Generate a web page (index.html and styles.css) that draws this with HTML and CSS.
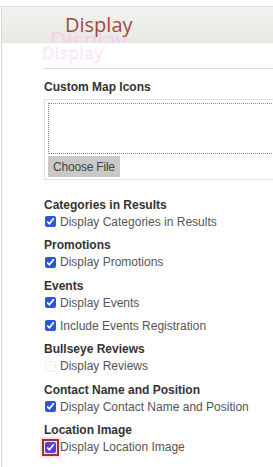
FILE: index.html
```html
<!DOCTYPE html>
<html lang="en">
<head>
    <meta charset="UTF-8">
    <meta name="viewport" content="width=device-width, initial-scale=1.0">
    <title>Display Settings</title>
    <link rel="stylesheet" href="styles.css">
</head>
<body>
    <div class="panel">
        <header class="panel-header">
            <h1 class="panel-title">Display</h1>
            <span class="ghost ghost-one">Display</span>
        </header>
        <span class="ghost ghost-two">Display</span>
        <section class="settings">
            <hr class="rule">
            <div class="group">
                <h2 class="group-title">Custom Map Icons</h2>
                <div class="upload">
                    <div class="drop-zone"></div>
                    <button class="file-button">Choose File</button>
                </div>
            </div>
            <div class="group group-first">
                <h2 class="group-title">Categories in Results</h2>
                <label class="option"><input type="checkbox" checked> Display Categories in Results</label>
            </div>
            <div class="group">
                <h2 class="group-title">Promotions</h2>
                <label class="option"><input type="checkbox" checked> Display Promotions</label>
            </div>
            <div class="group">
                <h2 class="group-title">Events</h2>
                <label class="option"><input type="checkbox" checked> Display Events</label>
                <label class="option option-extra"><input type="checkbox" checked> Include Events Registration</label>
            </div>
            <div class="group">
                <h2 class="group-title">Bullseye Reviews</h2>
                <label class="option"><input type="checkbox" disabled> Display Reviews</label>
            </div>
            <div class="group">
                <h2 class="group-title">Contact Name and Position</h2>
                <label class="option"><input type="checkbox" checked> Display Contact Name and Position</label>
            </div>
            <div class="group">
                <h2 class="group-title">Location Image</h2>
                <label class="option"><input class="focused" type="checkbox" checked> Display Location Image</label>
            </div>
        </section>
    </div>
</body>
</html>
```

FILE: styles.css
```css
body {
    margin: 0;
    background: #ffffff;
    font-family: "Liberation Sans", Arial, sans-serif;
    overflow: hidden;
}
.panel {
    position: relative;
    width: 320px;
    margin: 6px 0 0 1px;
    border-top: 1px solid #dcdcdc;
    border-left: 1px solid #d4d4d4;
    min-height: 470px;
}
.panel-header {
    position: relative;
    height: 35px;
    overflow: hidden;
    background: linear-gradient(180deg, #f2f2ef, #e9e8e4);
    border-bottom: 1px solid #e2e2e0;
    padding-left: 63px;
}
.panel-title {
    position: relative;
    z-index: 1;
    margin: 0;
    font-family: "Open Sans", sans-serif;
    font-weight: 400;
    font-size: 20px;
    line-height: 35px;
    color: #a04a3e;
}
.ghost {
    position: absolute;
    font-family: "Open Sans", sans-serif;
    pointer-events: none;
    line-height: 1;
}
.ghost-one {
    left: 48px;
    top: 22px;
    font-size: 23px;
    color: #f7cdee;
}
.ghost-two {
    left: 40px;
    top: 37px;
    font-size: 17px;
    color: #ffffff;
    -webkit-text-stroke: 0.5px #f5d4f2;
    letter-spacing: 0.6px;
}
.settings {
    padding-left: 42px;
}
.rule {
    margin: 25px 0 0;
    border: none;
    border-top: 1px solid #dddddd;
}
.group {
    margin-top: 8.5px;
}
.group:nth-child(2) {
    margin-top: 11px;
}
.group-first {
    margin-top: 17.5px;
}
.group-title {
    margin: 0;
    font-size: 12px;
    line-height: 14px;
    font-weight: 700;
    color: #333333;
}
.upload {
    margin-top: 5px;
    border: 1px solid #e0e0e0;
    padding: 3px 3px 2px;
}
.drop-zone {
    height: 49px;
    border: 1px dotted #8a8a8a;
}
.file-button {
    display: block;
    margin-top: 2px;
    height: 21px;
    padding: 0 5px;
    border: none;
    background: #c9c9c9;
    color: #444444;
    font-family: "Liberation Sans", Arial, sans-serif;
    font-size: 12px;
    letter-spacing: -0.2px;
}
.option {
    display: flex;
    align-items: center;
    gap: 4px;
    height: 16px;
    margin-top: 2px;
    font-size: 12px;
    color: #555555;
}
.option-extra {
    margin-top: 7px;
}
.option input {
    width: 11px;
    height: 11px;
    margin: 0 0 0 1px;
    accent-color: #2d55d8;
}
.option input:disabled {
    opacity: 0.35;
}
.option .focused {
    accent-color: #5b3cd4;
    outline: 2px solid #8b3a2b;
    outline-offset: 1px;
    box-shadow: 0 0 0 5px #fbe0f1;
}
```
